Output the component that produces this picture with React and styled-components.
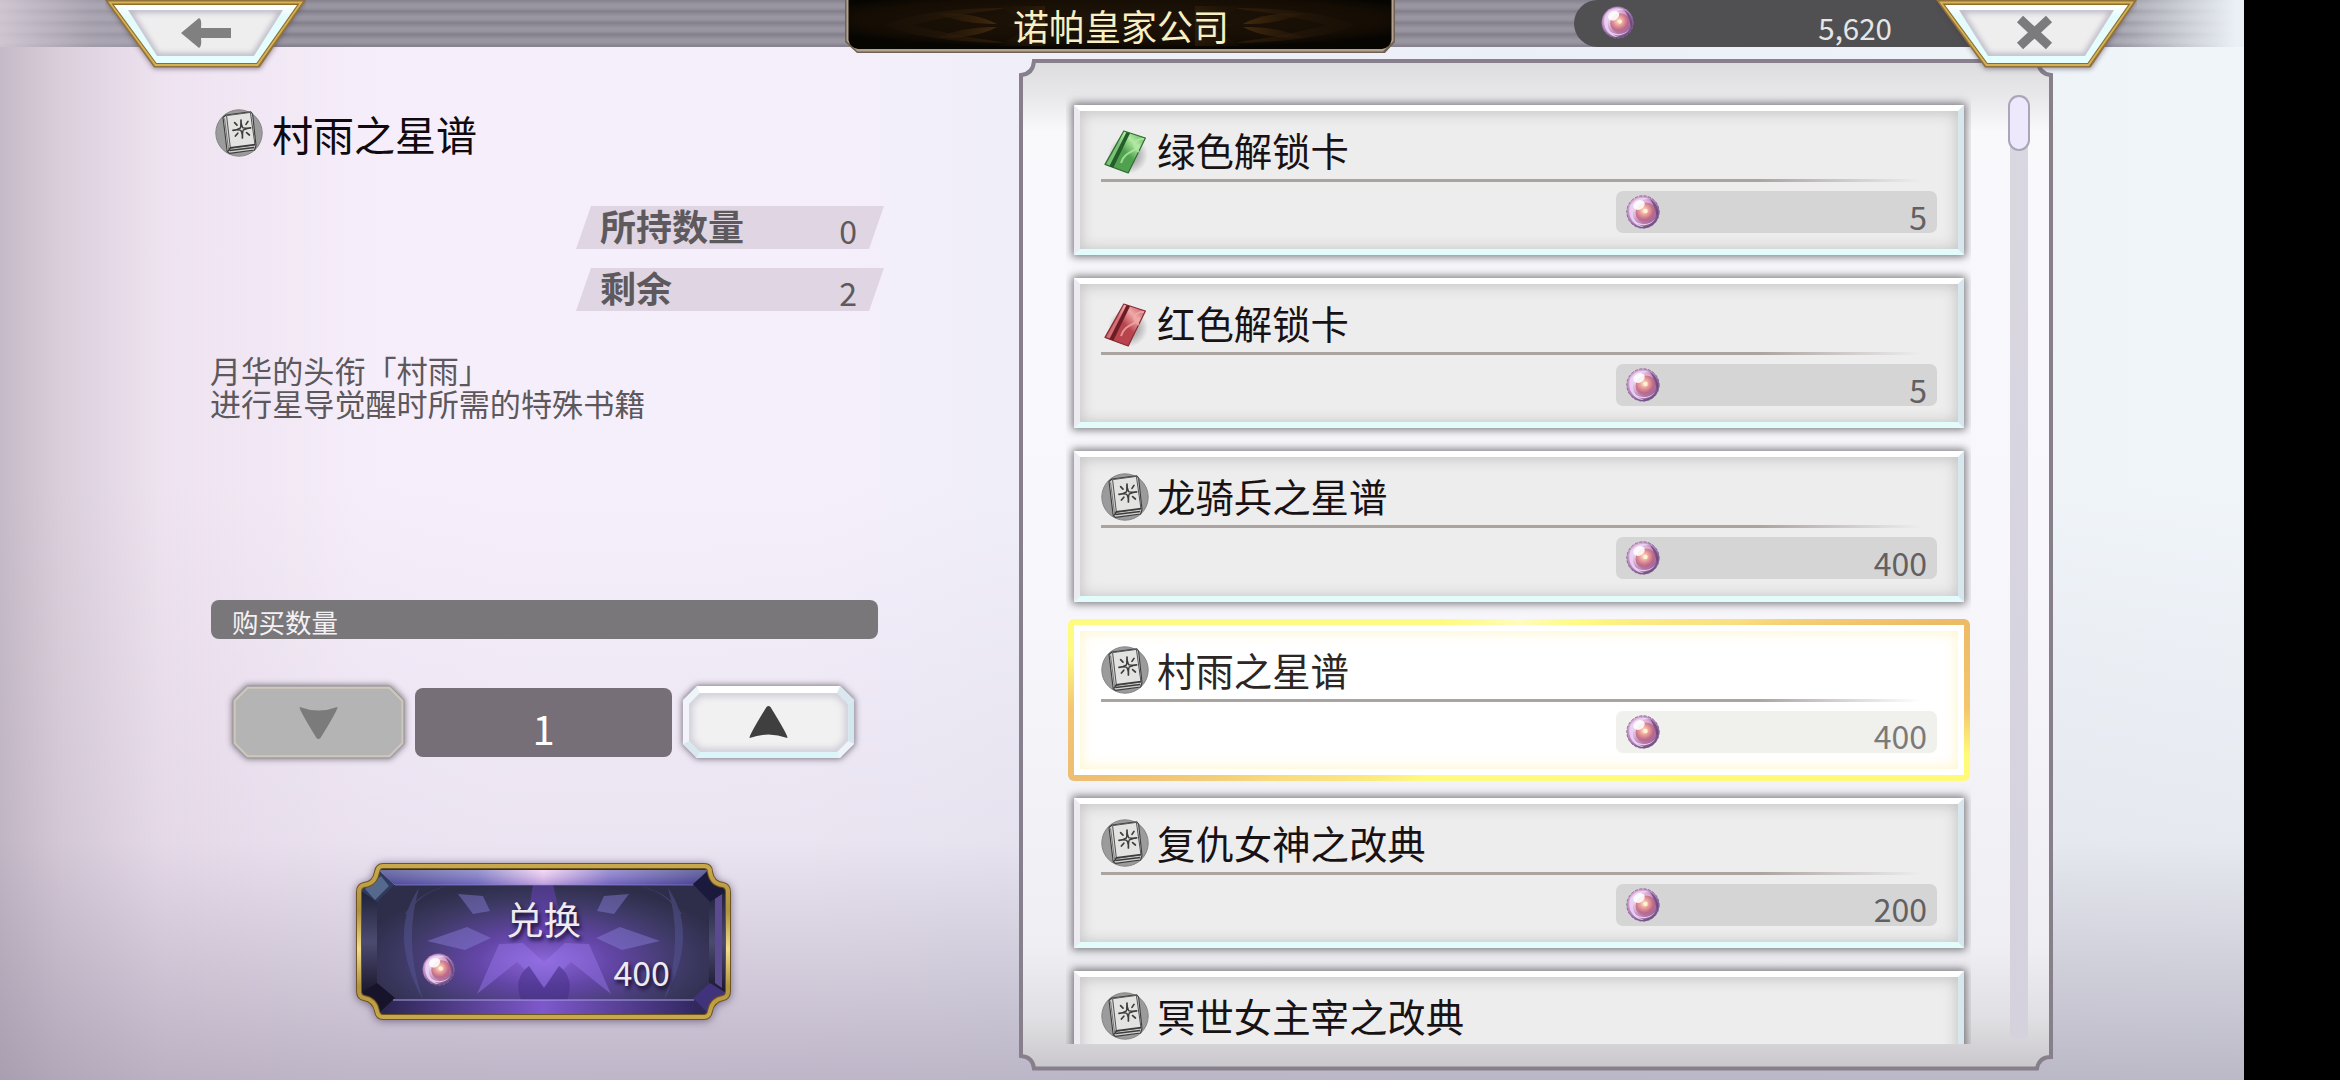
// App.jsx
import React, { useState } from 'react';
import styled, { createGlobalStyle, css } from 'styled-components';

const GlobalStyle = createGlobalStyle`
  * {
    box-sizing: border-box;
  }

  body {
    margin: 0;
    background: #000;
    overflow: hidden;
    font-family: 'Noto Sans CJK SC', 'Noto Sans', sans-serif;
  }

  button {
    font: inherit;
    border: none;
    padding: 0;
    background: none;
    cursor: pointer;
  }

  svg {
    display: block;
    flex: none;
  }
`;

// Layout
const Screen = styled.div`
  display: flex;
  flex-direction: column;
  width: 2244px;
  height: 1080px;
  background:
    linear-gradient(180deg, rgba(158, 146, 168, 0) 45%, rgba(158, 146, 168, 0.12) 78%, rgba(145, 136, 158, 0.55) 100%),
    linear-gradient(90deg, rgba(160, 148, 162, 0.55) 0, rgba(180, 166, 180, 0.4) 60px, rgba(215, 195, 212, 0.2) 160px, rgba(240, 225, 240, 0) 360px),
    linear-gradient(90deg, #f3e8f5 0, #f6effb 500px, #f5effb 800px, #f0eef9 1000px, #ebf0f8 1500px, #f0f5f9 2244px);
`;

const Header = styled.header`
  position: relative;
  z-index: 1;
  display: flex;
  align-items: flex-start;
  height: 47px;
  padding-left: 105px;
  background:
    linear-gradient(90deg, rgba(216, 206, 218, 0.85) 0, rgba(190, 182, 196, 0.5) 90px, rgba(150, 145, 160, 0) 290px, rgba(150, 145, 160, 0) 2090px, #eaf0f5 2236px),
    repeating-linear-gradient(180deg, #85828e 0, #9a97a3 5px, #9895a1 8px, #817e8a 11.6px);
`;

const Body = styled.main`
  display: flex;
  align-items: flex-start;
  flex: 1;
  padding: 12px 0 0 211px;
`;

const CornerButton = styled.button`
  z-index: 1;
  width: 201px;
  height: 72px;
`;

const CloseButton = styled(CornerButton)`
  margin-left: -64px;
`;

const TitlePlate = styled.div`
  position: relative;
  display: flex;
  justify-content: center;
  width: 550px;
  height: 54px;
  margin-left: 539px;
`;

const PlateArt = styled.svg`
  position: absolute;
  inset: 0;
`;

const TitleText = styled.h1`
  position: relative;
  margin: 0;
  padding-left: 2px;
  font-size: 36px;
  font-weight: 400;
  line-height: 50px;
  color: #f6f0c4;
`;

const Wallet = styled.div`
  display: flex;
  align-items: center;
  justify-content: space-between;
  width: 426px;
  height: 47px;
  margin-left: 179px;
  padding: 0 108px 3px 27px;
  border-radius: 24px 0 0 24px;
  background: #505052;
`;

const WalletAmount = styled.span`
  padding-top: 9px;
  font-size: 29.5px;
  line-height: 40px;
  color: #e6e6e6;
`;

// Left side
const Detail = styled.section`
  display: flex;
  flex-direction: column;
  width: 667px;
  margin-right: 141px;
`;

const ItemHeading = styled.div`
  display: flex;
  align-items: center;
  gap: 9px;
  height: 60px;
  margin-top: 44px;
  padding-left: 4px;
`;

const ItemName = styled.h2`
  margin: 0;
  font-size: 41px;
  font-weight: 400;
  line-height: 60px;
  color: #0f0a0f;
`;

const Stats = styled.div`
  display: flex;
  flex-direction: column;
  align-items: flex-start;
  gap: 19px;
  margin: 43px 0 0 365px;
`;

const StatRow = styled.div`
  display: flex;
  align-items: center;
  justify-content: space-between;
  width: 308px;
  height: 43px;
  padding: 0 27px 0 24px;
  clip-path: polygon(15px 0, 100% 0, 293px 100%, 0 100%);
  background: #e0d5e2;
  color: #5d595d;
`;

const StatLabel = styled.span`
  margin-top: -6px;
  font-size: 36px;
  font-weight: 700;
  line-height: 42px;
`;

const StatValue = styled.span`
  padding-top: 4px;
  font-size: 32px;
  line-height: 40px;
`;

const Description = styled.p`
  height: 234px;
  margin: 42px 0 0 -1px;
  font-size: 31.1px;
  line-height: 33.3px;
  white-space: pre-line;
  color: #5c585c;
`;

const QuantityLabel = styled.div`
  height: 39px;
  margin-top: 13px;
  padding: 2px 21px 0;
  border-radius: 8px;
  background: #7a777b;
  font-size: 26.5px;
  line-height: 40px;
  color: #f3f1f3;
`;

const Stepper = styled.div`
  display: flex;
  align-items: center;
  margin: 39px 0 0 14px;
`;

const StepButton = styled.button`
  width: 187px;
  height: 88px;
`;

const Amount = styled.div`
  width: 257px;
  height: 69px;
  margin: 0 3px;
  padding-top: 5px;
  border-radius: 8px;
  background: #776f78;
  font-size: 40px;
  line-height: 70px;
  text-align: center;
  color: #fff;
`;

const ExchangeButton = styled.button`
  position: relative;
  display: flex;
  flex-direction: column;
  width: 373px;
  height: 156px;
  margin: 98px 0 0 146px;
  color: #eeeaf0;
  text-shadow: 2px 3px 4px rgba(10, 0, 30, 0.9);
`;

const ExchangeArt = styled.svg`
  position: absolute;
  inset: 0;
  overflow: visible;
  filter: drop-shadow(0 1px 4px rgba(60, 40, 80, 0.6));
`;

const ExchangeLabel = styled.span`
  position: relative;
  align-self: center;
  margin-top: 26px;
  font-size: 37.5px;
  line-height: 56px;
`;

const ExchangeCost = styled.span`
  position: relative;
  display: flex;
  align-items: center;
  justify-content: space-between;
  width: 100%;
  height: 46px;
  padding: 0 60px 0 65px;
  font-size: 34px;
  line-height: 46px;
`;

const ExchangePrice = styled.span`
  padding-top: 5px;
`;

// Right side
const Panel = styled.section`
  position: relative;
  display: flex;
  width: 1034px;
  height: 1012px;
  padding: 30px 20px 27px 47px;
`;

const PanelFrame = styled.svg`
  position: absolute;
  inset: 0;
`;

const List = styled.div`
  position: relative;
  isolation: isolate;
  display: flex;
  flex-direction: column;
  gap: 23px;
  width: 905px;
  padding: 16px 7px 0 8px;
  overflow: hidden;
`;

const selectedCard = css`
  border-color: #fff;
  background: #fff;
  box-shadow: inset 0 0 12px 2px rgba(255, 240, 160, 0.5);

  &::before {
    content: '';
    position: absolute;
    z-index: -1;
    inset: -12px;
    border-radius: 6px;
    background: conic-gradient(
      #fffcc0 0deg, #fffb80 40deg, #fae080 70deg, #edba66 80deg, #f3c66c 91deg, #fffb78 97deg,
      #fffb80 180deg, #fffb80 230deg, #f9dc80 252deg, #edbd72 260deg, #f3c674 269deg,
      #fffb80 276deg, #fffb80 315deg, #fffcc0 360deg
    );
  }
`;

const Card = styled.article`
  position: relative;
  flex: none;
  display: flex;
  flex-direction: column;
  height: 150.2px;
  padding: 11px 21px 0;
  border: 6px solid;
  border-color: #fff #d8e6ee #e2fbfb #edeaf2;
  background: #ededed;
  box-shadow: 0 0 8px 2px rgba(50, 50, 55, 0.62), inset 0 1px 14px 1px rgba(90, 85, 95, 0.28);
  ${(props) => props.$selected && selectedCard}
`;

const CardTitle = styled.h3`
  display: flex;
  align-items: center;
  gap: 8px;
  height: 57px;
  margin: 0;
  font-size: 38.4px;
  font-weight: 400;
  color: ${(props) => (props.$selected ? '#2c2624' : '#181214')};
`;

const CardName = styled.span`
  padding-bottom: 3px;
  line-height: 54px;
`;

const Rule = styled.div`
  height: 3px;
  width: 820px;
  background: linear-gradient(90deg, #aaa3a0 0, #aaa3a0 80%, rgba(170, 163, 160, 0) 100%);
`;

const Price = styled.div`
  display: flex;
  align-items: center;
  justify-content: space-between;
  align-self: flex-end;
  width: 321px;
  height: 42px;
  margin-top: 9px;
  padding: 0 10px;
  border-radius: 7px;
  background: ${(props) => (props.$selected ? '#f0f0ec' : '#d5d5d5')};
  color: ${(props) => (props.$selected ? '#7b7a78' : '#626062')};
  font-size: 32px;
`;

const PriceValue = styled.span`
  padding-top: 7px;
  line-height: 42px;
`;

const Track = styled.div`
  position: relative;
  width: 22px;
  height: 944px;
  margin: 6px 0 0 37px;
  background: linear-gradient(#d9d7e0, #d5d2de) center / 18px 100% no-repeat;
  border-radius: 9px;
`;

const Thumb = styled.div`
  width: 22px;
  height: 56px;
  border: 2px solid #aaa6b8;
  border-radius: 11px;
  background: #ede8fc;
`;

// Icons
const Orb = ({ size = 34 }) => (
  <svg width={size} height={size} viewBox="0 0 34 34">
    <defs>
      <radialGradient id="orbBase" cx="0.42" cy="0.38" r="0.62">
        <stop offset="0" stopColor="#fff3f6" />
        <stop offset="0.45" stopColor="#e2b4d8" />
        <stop offset="0.8" stopColor="#b07cb4" />
        <stop offset="1" stopColor="#6d4a80" />
      </radialGradient>
      <radialGradient id="orbCore" cx="0.42" cy="0.38" r="0.6">
        <stop offset="0" stopColor="#ffe9c8" />
        <stop offset="0.35" stopColor="#eba29c" />
        <stop offset="0.75" stopColor="#b85c78" stopOpacity="0.8" />
        <stop offset="1" stopColor="#a0507c" stopOpacity="0.2" />
      </radialGradient>
    </defs>
    <circle cx="17" cy="17" r="16.2" fill="url(#orbBase)" />
    <path d="M4 11C8 3 17 1 23 4C15 4 9 10 7 18C7 25 12 30 18 32C8 32 1 22 4 11Z" fill="#ead6fa" opacity="0.85" />
    <path d="M24 4C31 8 34 16 31 23C30 17 28 10 24 4Z" fill="#5a3d72" opacity="0.7" />
    <circle cx="20" cy="18" r="10.5" fill="url(#orbCore)" />
    <path d="M8 25C13 30 23 31 29 24C26 30 13 34 8 25Z" fill="#fbe2f0" opacity="0.8" />
    <ellipse cx="13" cy="10" rx="6" ry="4.6" fill="#fff" opacity="0.88" transform="rotate(-28 13 10)" />
    <circle cx="19.5" cy="16" r="2.2" fill="#fff3d0" />
    <circle cx="17" cy="17" r="16.2" fill="none" stroke="#84689a" strokeWidth="0.9" strokeDasharray="3 1.5" />
  </svg>
);

const BookIcon = () => (
  <svg width="48" height="48" viewBox="0 0 48 48">
    <circle cx="24" cy="24" r="23.2" fill="#9b9b9b" stroke="#858585" strokeWidth="1" />
    <path d="M8 8.5L11 6L35.7 2.8L37.6 5L41 36.5L39.6 41L14.5 44.4L12.2 42.5Z" fill="#d0d0d0" stroke="#3c3c3c" strokeWidth="1.1" strokeLinejoin="round" />
    <path d="M11.6 6.6L35.4 3.4L40 36L15.4 39.4Z" fill="#e3e3e1" stroke="#555" strokeWidth="1" />
    <path d="M13 42.4L15.4 38.8L40.2 35.6M14.6 41.6L39.2 38.4" fill="none" stroke="#3c3c3c" strokeWidth="1.5" />
    <path d="M9.5 9.5L13.6 41" stroke="#777" strokeWidth="1" />
    <g stroke="#3d3d3d" strokeWidth="1.7" strokeLinecap="round">
      <path d="M26 11V16.6M27.4 23.6V29M18 21.4L23.4 20.5M30 19.6L35.6 18.8" />
      <path d="M19.6 13.6L22 16.2M33 12.4L31 15.4M20.4 27L22.8 24.2M34.4 26L31.6 23.6" />
    </g>
    <path d="M26.4 15L27.6 18.6L31.4 19.6L28.2 21L27.2 24.6L25.8 21.4L22.2 20.6L25.4 19Z" fill="#ecece8" stroke="#3d3d3d" strokeWidth="1.4" />
  </svg>
);

const cardColors = {
  green: { dark: '#245c2a', mid: '#4fa150', light: '#b2eaa2', edge: '#2f6d35' },
  red: { dark: '#6d1c26', mid: '#b8444e', light: '#f0aaa8', edge: '#8a2b35' },
};

const UnlockCardIcon = ({ color }) => {
  const c = cardColors[color];
  return (
    <svg width="48" height="48" viewBox="0 0 48 48">
      <defs>
        <linearGradient id={`unlock-${color}`} x1="0" y1="1" x2="1" y2="0">
          <stop offset="0" stopColor={c.mid} />
          <stop offset="0.5" stopColor={c.mid} />
          <stop offset="0.72" stopColor={c.light} />
          <stop offset="1" stopColor={c.mid} />
        </linearGradient>
        <radialGradient id={`unlock-shade-${color}`}>
          <stop offset="0.5" stopColor="#000" stopOpacity="0.25" />
          <stop offset="1" stopColor="#000" stopOpacity="0" />
        </radialGradient>
      </defs>
      <ellipse cx="27" cy="28" rx="20" ry="19" fill={`url(#unlock-shade-${color})`} />
      <path d="M22.8 4L44.4 11L27.2 46L4 37.4Z" fill={`url(#unlock-${color})`} stroke={c.edge} strokeWidth="1.2" strokeLinejoin="round" />
      <path d="M25.4 5L29 6.2L12.4 40.4L8.4 39.2Z" fill={c.dark} />
      <path d="M23.4 5L25.4 5.6L8.6 38.4L5.4 37Z" fill={c.light} opacity="0.45" />
      <path d="M43 12C35 11 31 18 35 22C31 25 23 26 20 36M39 18C35 19 35 23 38 25" fill="none" stroke={c.light} strokeWidth="2" opacity="0.8" />
    </svg>
  );
};

const ItemIcon = ({ type }) => (type === 'book' ? <BookIcon /> : <UnlockCardIcon color={type} />);

const CornerShape = ({ id, children }) => (
  <svg width="201" height="76" viewBox="0 0 201 76">
    <defs>
      <linearGradient id={`${id}-rim`} x1="0" y1="0" x2="0" y2="1">
        <stop offset="0" stopColor="#fff" />
        <stop offset="0.2" stopColor="#e4fbfc" />
        <stop offset="1" stopColor="#e6ffff" />
      </linearGradient>
      <filter id={`${id}-soft`}>
        <feGaussianBlur stdDeviation="2.4" />
      </filter>
      <clipPath id={`${id}-face`}>
        <path d="M23 10H178L149 56H52Z" />
      </clipPath>
    </defs>
    <path d="M0 0H201L155 69H49Z" fill="#3d3048" opacity="0.5" filter={`url(#${id}-soft)`} />
    <path d="M0 0H201L154.5 67.5H49Z" fill="#92713a" />
    <path d="M3 1.5H198L153 66H50Z" fill="#d3b355" />
    <path d="M6.5 3.5H194.5L152 64H51Z" fill="#8d6c2c" />
    <path d="M9 5H192L151.5 63H51.5Z" fill={`url(#${id}-rim)`} />
    <path d="M23 10H178L149 56H52Z" fill="#eeeeef" />
    <g clipPath={`url(#${id}-face)`}>
      <path d="M23 10H178L149 56H52Z" fill="none" stroke="#9793a8" strokeWidth="6" opacity="0.55" filter={`url(#${id}-soft)`} />
    </g>
    <path d="M10 5H191L178 10H23Z" fill="#fff" />
    {children}
  </svg>
);

const octagon = 'M22 8H166L180 22V66L166 80H22L8 66V22Z';

const StepShape = ({ id, disabled }) => (
  <svg width="187" height="88" viewBox="0 0 188 88" preserveAspectRatio="none">
    <defs>
      <filter id={`${id}-blur`} x="-10%" y="-20%" width="120%" height="140%">
        <feGaussianBlur stdDeviation="3" />
      </filter>
      <clipPath id={`${id}-clip`}>
        <path d="M25 15H163L174 26V63L163 74H25L14 63V26Z" />
      </clipPath>
    </defs>
    <path d={octagon} fill="#55505c" stroke="#55505c" strokeWidth="2" opacity="0.75" filter={`url(#${id}-blur)`} />
    {disabled ? (
      <>
        <path d={octagon} fill="#b5b4b5" stroke="#a09c98" strokeWidth="1" />
        <path d="M22.8 9.8H165.2L178.2 22.8V65.2L165.2 78.2H22.8L9.8 65.2V22.8Z" fill="none" stroke="#cdc8bb" strokeWidth="1.8" />
        <path d="M75 29Q94 36 113 29Q114 31 96 60Q94 62 92 60Q74 31 75 29Z" fill="#7b7b7b" />
      </>
    ) : (
      <>
        <path d={octagon} fill="#eef4fa" />
        <path d="M22 8H166L163 15H25Z" fill="#fff" />
        <path d="M22 80H166L163 74H25Z" fill="#dcf5f9" />
        <path d="M180 22V66L174 63V26Z" fill="#d3e8ee" />
        <path d="M166 8L180 22L174 26L163 15ZM8 66L22 80L25 74L14 63Z" fill="#d9e7ef" />
        <path d="M8 22V66L14 63V26Z" fill="#f4f2fb" />
        <path d="M25 15H163L174 26V63L163 74H25L14 63V26Z" fill="#f1f1f2" />
        <g clipPath={`url(#${id}-clip)`}>
          <path d="M25 15H163L174 26V63L163 74H25L14 63V26Z" fill="none" stroke="#b3b2c6" strokeWidth="7" opacity="0.6" filter={`url(#${id}-blur)`} />
        </g>
        <path d="M75 60Q94 53 113 60Q114 58 96 29Q94 27 92 29Q74 58 75 60Z" fill="#3f3f40" />
      </>
    )}
  </svg>
);

const plateOutline = 'M26 2H347Q353 2 353 8Q355 20 366 21Q371 22 371 28V127Q371 133 366 134Q355 136 353 147Q352 153 347 153H26Q21 153 20 147Q18 136 7 134Q2 133 2 127V28Q2 22 7 21Q18 20 20 8Q21 2 26 2Z';

const ExchangePlate = () => (
  <ExchangeArt width="373" height="156" viewBox="0 0 373 156">
    <defs>
      <radialGradient id="exGlow" cx="0.5" cy="0.62" r="0.5">
        <stop offset="0" stopColor="#8c66d8" />
        <stop offset="0.35" stopColor="#6446a8" />
        <stop offset="0.75" stopColor="#3e3a66" />
        <stop offset="1" stopColor="#2f2e4a" />
      </radialGradient>
      <linearGradient id="exTop">
        <stop offset="0" stopColor="#3d4285" />
        <stop offset="0.3" stopColor="#7573bd" />
        <stop offset="0.5" stopColor="#f2cdf3" />
        <stop offset="0.7" stopColor="#7c71c4" />
        <stop offset="1" stopColor="#35387c" />
      </linearGradient>
      <linearGradient id="exTopShade" x1="0" y1="0" x2="0" y2="1">
        <stop offset="0" stopColor="#fff" stopOpacity="0.25" />
        <stop offset="1" stopColor="#5f46b4" stopOpacity="0.35" />
      </linearGradient>
      <linearGradient id="exBottom">
        <stop offset="0" stopColor="#29244e" />
        <stop offset="0.5" stopColor="#7e58cc" />
        <stop offset="1" stopColor="#2c2558" />
      </linearGradient>
      <linearGradient id="exSide" x1="0" y1="0" x2="0" y2="1">
        <stop offset="0" stopColor="#1d2036" />
        <stop offset="0.5" stopColor="#4b4b70" />
        <stop offset="1" stopColor="#171428" />
      </linearGradient>
      <linearGradient id="exGold" x1="0" y1="0" x2="0" y2="1">
        <stop offset="0" stopColor="#c8a84c" />
        <stop offset="0.3" stopColor="#b2923f" />
        <stop offset="0.55" stopColor="#f4dc8c" />
        <stop offset="0.8" stopColor="#b2923f" />
        <stop offset="1" stopColor="#c8a84c" />
      </linearGradient>
      <clipPath id="exClip">
        <path d={plateOutline} />
      </clipPath>
    </defs>
    <g clipPath="url(#exClip)">
      <path d="M0 0H373V156H0Z" fill="url(#exGlow)" />
      {/* crest */}
      <g fill="#8a82dc" opacity="0.45">
        <path d="M176 20H196L203 52L187 76L171 52Z" fill="#7246cc" />
        <path d="M70 77L110 63L134 74L108 86Z" />
        <path d="M303 77L263 63L239 74L265 86Z" />
        <path d="M101 30L126 32L133 47L116 50Z" />
        <path d="M272 30L247 32L240 47L257 50Z" />
        <path d="M142 80L166 79L187 98L208 79L232 80L254 130L214 98L187 124L160 98L120 130Z" fill="#9a78ee" />
        <path d="M164 136Q156 114 172 102L187 124L202 102Q218 114 210 136Z" fill="#3f2a80" />
        <path d="M62 24Q30 70 66 136Q46 80 62 24ZM311 24Q343 70 307 136Q327 80 311 24Z" fill="#595a9c" />
        <path d="M48 50Q62 28 90 22Q60 30 52 50ZM325 50Q311 28 283 22Q313 30 321 50Z" fill="#595a9c" />
      </g>
      <path d="M22 6H351L337 21H36Z" fill="url(#exTop)" />
      <path d="M22 6H351L337 21H36Z" fill="url(#exTopShade)" />
      <path d="M36 136H337L350 151H22Z" fill="url(#exBottom)" />
      <path d="M5 24L20 37V121L5 132Z" fill="url(#exSide)" />
      <path d="M368 24L352 37V121L368 132Z" fill="url(#exSide)" />
      <path d="M358 34L365 30V124L358 119Z" fill="#5c4a90" />
      <path d="M20 5L38 20L20 38L3 26Z" fill="#30395e" />
      <path d="M8 25L24 12L32 22L18 36Z" fill="#6d8aac" opacity="0.6" />
      <path d="M353 5L336 20L353 38L371 26Z" fill="#1b1a3c" />
      <path d="M20 151L38 134L20 119L3 130Z" fill="#17132a" />
      <path d="M353 151L336 134L353 119L371 130Z" fill="#41327c" />
      <path d="M36 136H337" stroke="#aaa0e4" strokeWidth="1.2" />
      <path d="M38 21H336M22 6L38 21" stroke="#8f92d6" strokeWidth="1" opacity="0.6" />
    </g>
    <path d={plateOutline} fill="none" stroke="#6d5520" strokeWidth="6" />
    <path d={plateOutline} fill="none" stroke="url(#exGold)" strokeWidth="4" />
  </ExchangeArt>
);

const TitleArt = () => (
  <PlateArt width="550" height="54" viewBox="0 0 550 54">
    <defs>
      <radialGradient id="plateFill" cx="0.5" cy="0.4" r="0.6">
        <stop offset="0" stopColor="#201408" />
        <stop offset="0.8" stopColor="#150d04" />
        <stop offset="1" stopColor="#070502" />
      </radialGradient>
      <linearGradient id="wing" x1="0" x2="1">
        <stop offset="0" stopColor="#2a1a0a" stopOpacity="0.3" />
        <stop offset="1" stopColor="#432a0e" />
      </linearGradient>
    </defs>
    <path d="M0 0H550V42L540 53H12L0 42Z" fill="#6d6253" />
    <path d="M1.5 0H548.5V41L538 51.5H12.5L1.5 41Z" fill="#b3a28e" />
    <path d="M3.5 0H546.5V40Q545 48 537 49H13Q5 48 3.5 40Z" fill="url(#plateFill)" />
    {[false, true].map((flip) => (
      <g key={String(flip)} fill="url(#wing)" transform={flip ? 'translate(550 0) scale(-1 1)' : undefined}>
        <path d="M40 25Q80 8 160 8L150 10Q110 14 68 25Q110 36 150 41L160 43Q80 42 40 25Z" opacity="0.5" />
        <path d="M90 13Q130 12 152 24Q120 25 90 13Z" />
        <path d="M90 38Q130 39 152 27Q120 26 90 38Z" />
        <path d="M154 6L180 22L160 25L180 30L154 46H200V6Z" opacity="0.45" />
      </g>
    ))}
  </PlateArt>
);

const FrameArt = () => (
  <PanelFrame width="1034" height="1012" viewBox="0 0 1034 1012">
    <defs>
      <linearGradient id="panelFill" x1="0" y1="0" x2="0" y2="1">
        <stop offset="0" stopColor="#dcdcdf" />
        <stop offset="0.035" stopColor="#e8e8eb" />
        <stop offset="0.07" stopColor="#f9f9fc" />
        <stop offset="0.5" stopColor="#f8f7fc" />
        <stop offset="0.88" stopColor="#efeef3" />
        <stop offset="0.95" stopColor="#e0dfe3" />
        <stop offset="1" stopColor="#c9c7ca" />
      </linearGradient>
    </defs>
    <path
      d="M15 2H1019Q1020 15 1032 16V998Q1020 998 1018 1009.5H15Q14 998 2 997V16Q14 15 15 2Z"
      fill="url(#panelFill)"
      stroke="#887f8c"
      strokeWidth="4"
    />
  </PanelFrame>
);

const items = [
  { id: 1, type: 'green', name: '绿色解锁卡', price: 5 },
  { id: 2, type: 'red', name: '红色解锁卡', price: 5 },
  { id: 3, type: 'book', name: '龙骑兵之星谱', price: 400 },
  {
    id: 4,
    type: 'book',
    name: '村雨之星谱',
    price: 400,
    owned: 0,
    left: 2,
    description: '月华的头衔「村雨」\n进行星导觉醒时所需的特殊书籍',
  },
  { id: 5, type: 'book', name: '复仇女神之改典', price: 200 },
  { id: 6, type: 'book', name: '冥世女主宰之改典' },
];

const App = () => {
  const [selectedId, setSelectedId] = useState(4);
  const [amount, setAmount] = useState(1);
  const selected = items.find((item) => item.id === selectedId);
  const max = selected.left ?? 2;

  const handleSelect = (id) => {
    setSelectedId(id);
    setAmount(1);
  };

  return (
    <Screen>
      <GlobalStyle />
      <Header>
        <CornerButton aria-label="返回">
          <CornerShape id="back">
            <path d="M76 33L94 18Q97 19 96 28H126V38H96Q97 46 94 48Z" fill="#808080" />
          </CornerShape>
        </CornerButton>
        <TitlePlate>
          <TitleArt />
          <TitleText>诺帕皇家公司</TitleText>
        </TitlePlate>
        <Wallet>
          <Orb size={33} />
          <WalletAmount>5,620</WalletAmount>
        </Wallet>
        <CloseButton aria-label="关闭">
          <CornerShape id="close">
            <path d="M84 19L113 46M113 19L84 46" stroke="#7b7b7d" strokeWidth="9" fill="none" />
          </CornerShape>
        </CloseButton>
      </Header>

      <Body>
        <Detail>
          <ItemHeading>
            <ItemIcon type={selected.type} />
            <ItemName>{selected.name}</ItemName>
          </ItemHeading>
          <Stats>
            <StatRow>
              <StatLabel>所持数量</StatLabel>
              <StatValue>{selected.owned ?? 0}</StatValue>
            </StatRow>
            <StatRow>
              <StatLabel>剩余</StatLabel>
              <StatValue>{max}</StatValue>
            </StatRow>
          </Stats>
          <Description>{selected.description}</Description>
          <QuantityLabel>购买数量</QuantityLabel>
          <Stepper>
            <StepButton disabled={amount <= 1} onClick={() => setAmount(amount - 1)} aria-label="减少">
              <StepShape id="down" disabled={amount <= 1} />
            </StepButton>
            <Amount>{amount}</Amount>
            <StepButton disabled={amount >= max} onClick={() => setAmount(amount + 1)} aria-label="增加">
              <StepShape id="up" />
            </StepButton>
          </Stepper>
          <ExchangeButton>
            <ExchangePlate />
            <ExchangeLabel>兑换</ExchangeLabel>
            <ExchangeCost>
              <Orb size={33} />
              <ExchangePrice>{(selected.price ?? 0) * amount}</ExchangePrice>
            </ExchangeCost>
          </ExchangeButton>
        </Detail>

        <Panel>
          <FrameArt />
          <List>
            {items.map((item) => {
              const active = item.id === selectedId;
              return (
                <Card key={item.id} $selected={active} onClick={() => handleSelect(item.id)}>
                  <CardTitle $selected={active}>
                    <ItemIcon type={item.type} />
                    <CardName>{item.name}</CardName>
                  </CardTitle>
                  <Rule />
                  {item.price && (
                    <Price $selected={active}>
                      <Orb />
                      <PriceValue>{item.price}</PriceValue>
                    </Price>
                  )}
                </Card>
              );
            })}
          </List>
          <Track>
            <Thumb />
          </Track>
        </Panel>
      </Body>
    </Screen>
  );
};

export default App;
